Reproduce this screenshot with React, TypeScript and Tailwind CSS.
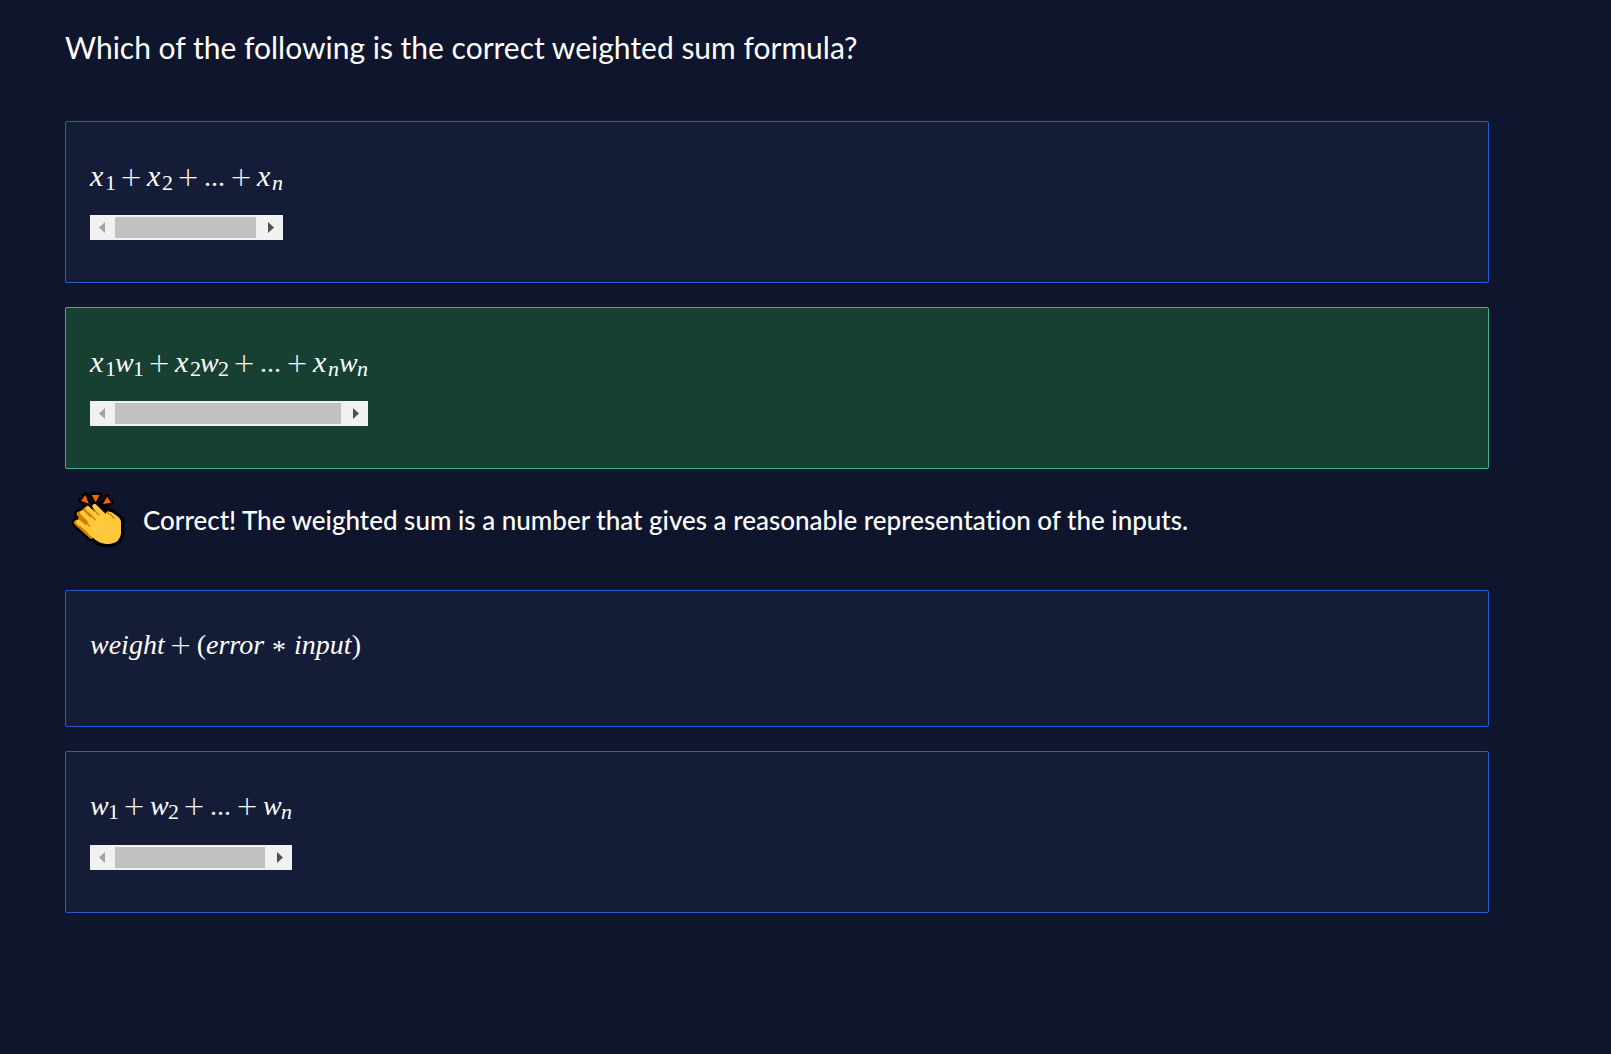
import { Fragment, ReactNode, useState } from "react";

function Variable({ name, sub }: { name: "x" | "w"; sub: string }) {
  return (
    <span className="flex items-baseline">
      <i className={name === "x" ? "w-[15px] text-[30px]" : "w-[18px] text-[28px]"}>{name}</i>
      <span className={sub === "n" ? "relative top-1 w-[11px] text-[22px] italic" : "relative top-1 w-[10px] text-[22px]"}>
        {sub}
      </span>
    </span>
  );
}

function Operator({ children }: { children: ReactNode }) {
  return (
    <span className="mx-[5px] flex w-[22px] justify-center font-['DejaVu_Sans',sans-serif] text-[27px] font-extralight">
      {children}
    </span>
  );
}

function Sum({ terms }: { terms: ReactNode[] }) {
  return (
    <>
      {terms.map((term, i) => (
        <Fragment key={i}>
          {i > 0 && <Operator>+</Operator>}
          {term}
        </Fragment>
      ))}
    </>
  );
}

function Scrollbar() {
  return (
    <span className="mt-[19px] flex h-[25px] items-center bg-[#f1f1f1]" aria-hidden="true">
      <svg className="h-[25px] w-[25px]" viewBox="0 0 25 25">
        <path d="M15 7v11L9 12.5z" fill="#a3a3a3" />
      </svg>
      <span className="h-[21px] flex-1 bg-[#c1c1c1]" />
      <svg className="h-[25px] w-[27px]" viewBox="0 0 27 25">
        <path d="M12 7v11l6-5.500z" fill="#505050" />
      </svg>
    </span>
  );
}

function Option({
  children,
  correct = false,
  scroll = true,
  onSelect,
}: {
  children: ReactNode;
  correct?: boolean;
  scroll?: boolean;
  onSelect: () => void;
}) {
  return (
    <button
      type="button"
      onClick={onSelect}
      className={
        "flex w-full rounded-xs border px-6 pt-[34px] text-left text-white " +
        (scroll ? "pb-[42px] " : "pb-[61px] ") +
        (correct ? "border-[#3cb388] bg-[#174032]" : "border-[#2b5bd0] bg-[#151c38]")
      }
    >
      <span className="flex flex-col">
        <span className="flex h-10 items-baseline font-['Liberation_Serif',serif] text-[28px] leading-10">
          {children}
        </span>
        {scroll && <Scrollbar />}
      </span>
    </button>
  );
}

const flames = "M63 62 76 45 87 71zM95 45h24l-12 22zM141 50l12 18-24 4z";
const fingers = "M104 79 142 117M83 85 128 130M67 98 115 146M55 126 100 166";
const backFingers = "M76 90 120 134M58 102 96 140M50 128 94 168";
const palm = "M108 86 136 112q-2-14 8-18 14 2 24 12 14 8 15 20v34q-2 28-34 32-24 2-42-12L72 146z";

function Clap() {
  return (
    <svg className="h-14 w-[55px] shrink-0" viewBox="30 36 165 168" aria-hidden="true">
      <g fill="#000" stroke="#000" strokeWidth="16" strokeLinejoin="round">
        <path d={flames} />
        <path d={palm} strokeWidth="20" />
        <path d="M76 66h64l10 26H84z" strokeWidth="4" />
      </g>
      <path d={fingers + backFingers} stroke="#000" strokeWidth="31" strokeLinecap="round" />
      <path d={flames} fill="#f7630c" />
      <g strokeLinecap="round">
        <path d="M50 128 94 168l46 24-20-50L62 98z" fill="#d67d00" />
        <path d={backFingers} stroke="#d67d00" strokeWidth="16" />
        <path d="M62 128 100 166M67 98 115 146" stroke="#d67d00" strokeWidth="15" />
        <path d={fingers} stroke="#ffc83d" strokeWidth="14" />
      </g>
      <path d={palm} fill="#ffc83d" />
      <path
        d="M87 100 106 119M66 116 88 138M60 140 84 161M100 88 116 104M142 98q10 4 20 16"
        fill="none"
        stroke="#d67d00"
        strokeWidth="4"
        strokeLinecap="round"
      />
    </svg>
  );
}

const dots = <span className="w-[21px] text-center text-[28px]">...</span>;

export default function App() {
  const [, setSelected] = useState(1);

  return (
    <main className="min-h-screen bg-[#10152e] pr-[122px] pb-16 pl-[65px] font-['Lato',sans-serif] text-white">
      <h1 className="pt-[27px] text-[30px] leading-10">Which of the following is the correct weighted sum formula?</h1>
      <div className="mt-[54px] flex flex-col">
        <Option onSelect={() => setSelected(0)}>
          <Sum terms={[<Variable name="x" sub="1" />, <Variable name="x" sub="2" />, dots, <Variable name="x" sub="n" />]} />
        </Option>
        <div className="mt-6">
          <Option correct onSelect={() => setSelected(1)}>
            <Sum
              terms={[
                <><Variable name="x" sub="1" /><Variable name="w" sub="1" /></>,
                <><Variable name="x" sub="2" /><Variable name="w" sub="2" /></>,
                dots,
                <><Variable name="x" sub="n" /><Variable name="w" sub="n" /></>,
              ]}
            />
          </Option>
        </div>
        <div className="flex items-center gap-[18px] pt-[23px] pb-[42px] pl-[5px]" role="status">
          <Clap />
          <p className="text-[26px] leading-10 font-medium [font-variant-ligatures:none]">
            Correct! The weighted sum is a number that gives a reasonable representation of the inputs.
          </p>
        </div>
        <Option scroll={false} onSelect={() => setSelected(2)}>
          <i>weight</i>
          <Operator>+</Operator>
          <span>(</span>
          <i>error</i>
          <span className="relative top-[5px] mx-2 w-[14px] text-center">*</span>
          <i>input</i>
          <span>)</span>
        </Option>
        <div className="mt-6">
          <Option onSelect={() => setSelected(3)}>
            <Sum terms={[<Variable name="w" sub="1" />, <Variable name="w" sub="2" />, dots, <Variable name="w" sub="n" />]} />
          </Option>
        </div>
      </div>
    </main>
  );
}
